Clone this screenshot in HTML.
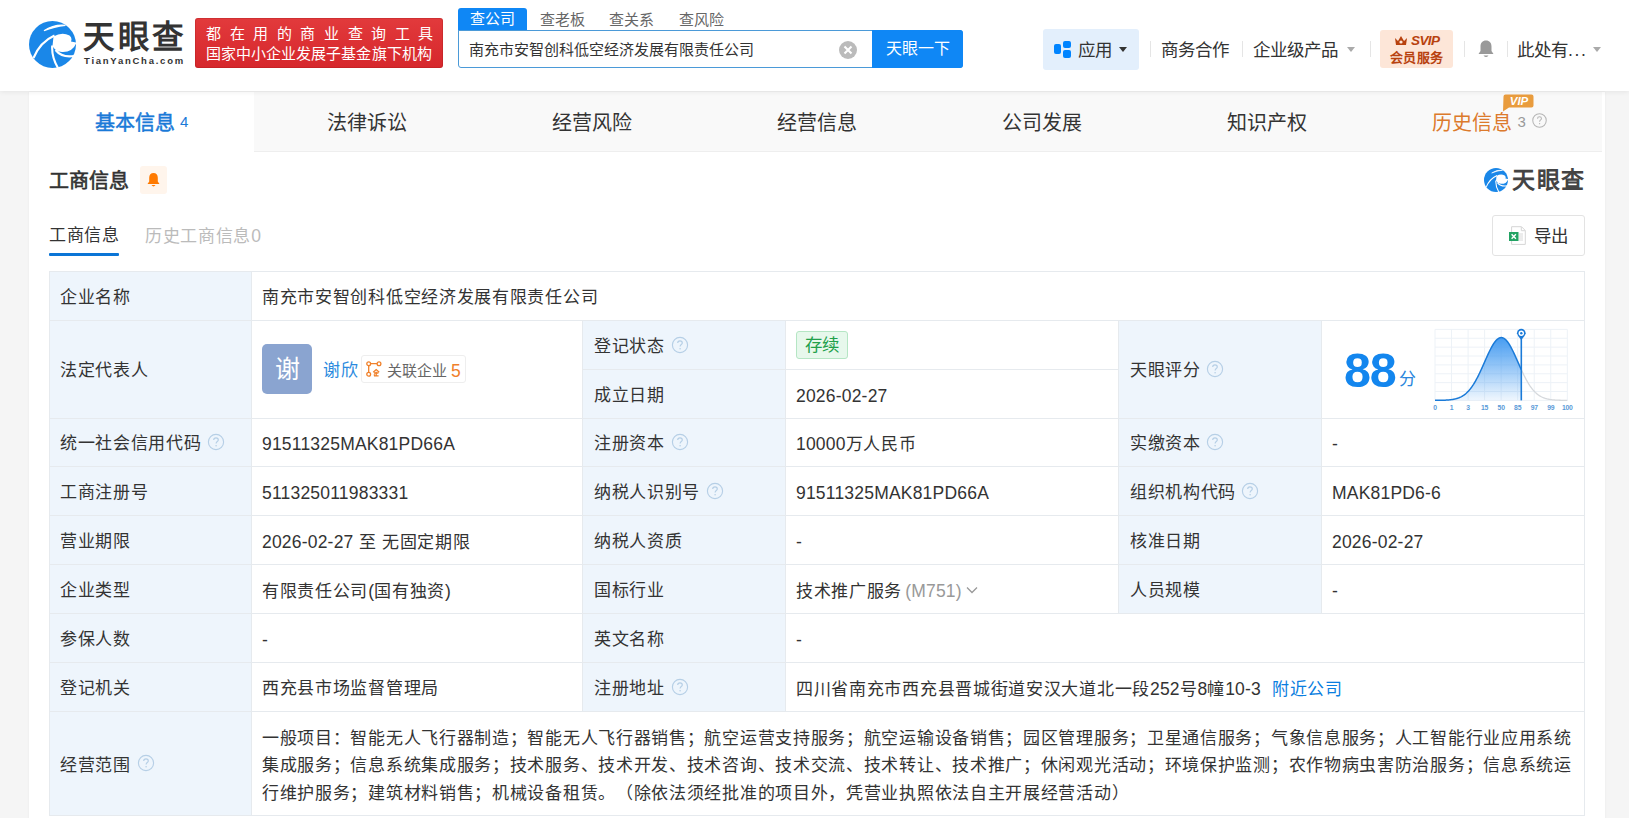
<!DOCTYPE html>
<html lang="zh-CN"><head><meta charset="utf-8">
<style>
*{margin:0;padding:0;box-sizing:border-box}
html,body{width:1629px;height:818px;overflow:hidden;background:#f5f5f5;font-family:"Liberation Sans",sans-serif;color:#333}
.a{position:absolute;white-space:nowrap;text-spacing-trim:space-all}
.k{font-size:17px;letter-spacing:.7px}
.n{font-size:17.5px;letter-spacing:.2px}
#hdr{position:absolute;left:0;top:0;width:1629px;height:91px;background:#fff;box-shadow:0 1px 5px rgba(0,0,0,.07);z-index:5}
#card{position:absolute;left:29px;top:92px;width:1576px;height:730px;background:#fff;box-shadow:0 0 2px rgba(0,0,0,.06)}
#tabs{position:absolute;left:0;top:0;width:1573px;height:60px;background:#f9f9f9;border-bottom:1px solid #eee}
.tab{position:absolute;top:2px;height:58px;line-height:58px;font-size:20px;color:#333;text-align:center;width:225px}
.sep{position:absolute;top:41px;width:1px;height:16px;background:#e5e5e5}
.caret{position:absolute;width:0;height:0;border-left:4px solid transparent;border-right:4px solid transparent;border-top:5px solid #999}
</style></head><body>
<div id="hdr">
 <!-- logo -->
 <svg class="a" style="left:29px;top:21px" width="47" height="47" viewBox="0 0 47 47">
  <circle cx="23.5" cy="23.5" r="23.5" fill="#1a87e8"/>
  <path d="M24.5 15.5Q33 10.5 40.5 14.5Q43.5 17 42 20.5L47.5 21.5Q44 31.5 33 31Q26 30.5 23.5 25Z" fill="#fff"/>
  <path d="M15 9.8Q25 3 36.5 4.3Q25 5.5 15 9.8Z" fill="#fff" stroke="#fff" stroke-width="1.2"/>
  <path d="M4.5 37Q11 21 25.5 14.5" fill="none" stroke="#fff" stroke-width="2.1"/>
  <path d="M23.2 24.5Q22.5 36 29 47" fill="none" stroke="#fff" stroke-width="2.1"/>
  <path d="M26.5 29Q33 37 45 35" fill="none" stroke="#fff" stroke-width="2.1"/>
 </svg>
 <div class="a" style="left:83px;top:17px;font-size:31.5px;line-height:40px;font-weight:bold;color:#333;letter-spacing:2.5px">天眼查</div>
 <div class="a" style="left:84px;top:55px;font-size:9.5px;line-height:11px;font-weight:bold;color:#333;letter-spacing:1.75px">TianYanCha.com</div>
 <!-- red badge -->
 <div class="a" style="left:195px;top:18px;width:248px;height:50px;background:linear-gradient(#e23a3c,#d6272c);border-radius:3px;box-shadow:inset 0 0 0 1px rgba(150,20,20,.25)"></div>
 <div class="a" style="left:206px;top:23px;font-size:15px;line-height:22px;color:#fff;letter-spacing:8.6px">都在用的商业查询工具</div>
 <div class="a" style="left:206px;top:43px;font-size:15px;line-height:22px;color:#fff;letter-spacing:0.05px">国家中小企业发展子基金旗下机构</div>
 <!-- search -->
 <div class="a" style="left:458px;top:8px;width:69px;height:23px;background:#0f87f5;border-radius:3px 3px 0 0;color:#fff;font-size:15px;line-height:22px;text-align:center">查公司</div>
 <div class="a" style="left:540px;top:9px;font-size:15px;line-height:22px;color:#666">查老板</div>
 <div class="a" style="left:609px;top:9px;font-size:15px;line-height:22px;color:#666">查关系</div>
 <div class="a" style="left:679px;top:9px;font-size:15px;line-height:22px;color:#666">查风险</div>
 <div class="a" style="left:458px;top:30px;width:505px;height:38px;border:1px solid #4b9ad8;border-radius:0 3px 3px 3px;background:#fff"></div>
 <div class="a" style="left:469px;top:31px;font-size:15px;line-height:37px;color:#333">南充市安智创科低空经济发展有限责任公司</div>
 <svg class="a" style="left:839px;top:41px" width="18" height="18" viewBox="0 0 18 18"><circle cx="9" cy="9" r="9" fill="#bbb"/><path d="M5.5 5.5L12.5 12.5M12.5 5.5L5.5 12.5" stroke="#fff" stroke-width="2.1"/></svg>
 <div class="a" style="left:872px;top:30px;width:91px;height:38px;background:#0f87f5;border-radius:0 3px 3px 0;color:#fff;font-size:16px;line-height:37px;text-align:center">天眼一下</div>
 <!-- right nav -->
 <div class="a" style="left:1043px;top:29px;width:96px;height:41px;background:#e3effc;border-radius:3px"></div>
 <svg class="a" style="left:1054px;top:41px" width="19" height="18" viewBox="0 0 19 18"><rect x="0" y="3" width="7" height="10" rx="2" fill="#0084ff"/><rect x="9" y="0" width="8" height="7" rx="2" fill="#0084ff"/><rect x="9" y="9" width="8" height="8" rx="2" fill="#0084ff"/></svg>
 <div class="a" style="left:1078px;top:39px;font-size:17.5px;line-height:22px;color:#333">应用</div>
 <div class="caret" style="left:1119px;top:47px;border-top-color:#333"></div>
 <div class="sep" style="left:1150px"></div>
 <div class="a" style="left:1161px;top:39px;font-size:17.5px;line-height:22px;color:#333">商务合作</div>
 <div class="sep" style="left:1242px"></div>
 <div class="a" style="left:1253px;top:39px;font-size:17.5px;line-height:22px;color:#333">企业级产品</div>
 <div class="caret" style="left:1347px;top:47px;border-top-color:#aaa"></div>
 <div class="sep" style="left:1370px"></div>
 <div class="a" style="left:1380px;top:30px;width:73px;height:38px;background:#fde6d8;border-radius:3px"></div>
 <svg class="a" style="left:1394px;top:35px" width="14" height="12" viewBox="0 0 14 12"><path d="M1 3L4 6L7 1L10 6L13 3L12 10H2Z" fill="#b8420f"/><circle cx="7" cy="7" r="1.6" fill="#fde6d8"/></svg>
 <div class="a" style="left:1411px;top:32px;font-size:13.5px;font-weight:bold;font-style:italic;color:#b8420f;line-height:18px;letter-spacing:-0.6px">SVIP</div>
 <div class="a" style="left:1390px;top:49px;font-size:13px;font-weight:bold;color:#b8420f;line-height:17px;letter-spacing:0.3px">会员服务</div>
 <div class="sep" style="left:1464px"></div>
 <svg class="a" style="left:1477px;top:39px" width="18" height="20" viewBox="0 0 18 20"><path d="M9 1.5C5.5 1.5 3.5 4 3.5 7.5V12L1.5 15H16.5L14.5 12V7.5C14.5 4 12.5 1.5 9 1.5Z" fill="#999"/><path d="M6.5 16.5Q9 19.5 11.5 16.5Z" fill="#999"/></svg>
 <div class="sep" style="left:1507px"></div>
 <div class="a" style="left:1517px;top:39px;font-size:17.5px;line-height:22px;color:#333">此处有<span style="letter-spacing:1.6px">...</span></div>
 <div class="caret" style="left:1593px;top:47px;border-top-color:#aaa"></div>
</div>
<div id="card">
 <div id="tabs">
  <div class="tab" style="left:0;top:0;height:60px;padding-top:2px;background:#fff;color:#1a7ad8"><span style="-webkit-text-stroke:0.5px #1a7ad8">基本信息</span> <span style="font-size:15px;position:relative;top:-3px">4</span></div>
  <div class="tab" style="left:225px">法律诉讼</div>
  <div class="tab" style="left:450px">经营风险</div>
  <div class="tab" style="left:675px">经营信息</div>
  <div class="tab" style="left:900px">公司发展</div>
  <div class="tab" style="left:1125px">知识产权</div>
  <div class="tab" style="left:1350px;width:auto;padding-left:53px;color:#dc7a2c;text-align:left">历史信息 <span style="font-size:15px;color:#999;position:relative;top:-3px">3</span></div>
  <svg class="a" style="left:1503px;top:21px" width="15" height="15" viewBox="0 0 16 16"><circle cx="8" cy="8" r="7.2" fill="none" stroke="#b5b5b5" stroke-width="1.1"/><path d="M5.9 6.2C5.9 4.9 6.8 4.1 8 4.1C9.2 4.1 10.1 4.9 10.1 6C10.1 7.4 8.1 7.5 8.1 9.2" fill="none" stroke="#b5b5b5" stroke-width="1.1"/><circle cx="8.1" cy="11.4" r="0.7" fill="#b5b5b5"/></svg>
  <svg class="a" style="left:1473px;top:2px" width="32" height="18" viewBox="0 0 32 18"><path d="M2.5 0.5H29.5Q31.5 0.5 31.5 2.5V11.5Q31.5 13.5 29.5 13.5H7L1 17.5L1.5 2.5Q1.5 0.5 3.5 0.5Z" fill="#e99c3e"/><text x="17" y="11.2" text-anchor="middle" font-family="Liberation Sans" font-weight="bold" font-style="italic" font-size="11.5" fill="#fff">VIP</text></svg>
 </div>
</div>

<!-- section title -->
<div class="a" style="left:49px;top:168px;font-size:20px;line-height:26px;-webkit-text-stroke:0.6px #333;color:#333">工商信息</div>
<div class="a" style="left:140px;top:166px;width:27px;height:28px;background:#fff5ec;border-radius:3px"></div>
<svg class="a" style="left:146px;top:172px" width="15" height="16" viewBox="0 0 15 16"><path d="M7.5 1C4.8 1 3.2 3 3.2 5.8V9.5L1.5 12H13.5L11.8 9.5V5.8C11.8 3 10.2 1 7.5 1Z" fill="#ff7a00"/><path d="M5.5 13Q7.5 15.8 9.5 13Z" fill="#ff7a00"/></svg>
<!-- right logo -->
<svg class="a" style="left:1484px;top:168px" width="24" height="24" viewBox="0 0 47 47"><circle cx="23.5" cy="23.5" r="23.5" fill="#1a87e8"/>
  <path d="M24.5 15.5Q33 10.5 40.5 14.5Q43.5 17 42 20.5L47.5 21.5Q44 31.5 33 31Q26 30.5 23.5 25Z" fill="#fff"/>
  <path d="M15 9.8Q25 3 36.5 4.3Q25 5.5 15 9.8Z" fill="#fff" stroke="#fff" stroke-width="1.2"/>
  <path d="M4.5 37Q11 21 25.5 14.5" fill="none" stroke="#fff" stroke-width="2.1"/>
  <path d="M23.2 24.5Q22.5 36 29 47" fill="none" stroke="#fff" stroke-width="2.1"/>
  <path d="M26.5 29Q33 37 45 35" fill="none" stroke="#fff" stroke-width="2.1"/>
 </svg>
<div class="a" style="left:1512px;top:165px;font-size:23px;line-height:30px;font-weight:bold;color:#444;letter-spacing:1.5px">天眼查</div>
<!-- subtabs -->
<div class="a k" style="left:49px;top:224px;line-height:24px;color:#333">工商信息</div>
<div class="a" style="left:49px;top:253px;width:70px;height:3px;background:#0b75d6;border-radius:1px"></div>
<div class="a k" style="left:145px;top:224px;line-height:24px;color:#bbb">历史工商信息<span class="n">0</span></div>
<!-- export -->
<div class="a" style="left:1492px;top:215px;width:93px;height:41px;border:1px solid #e3e3e3;border-radius:3px;background:#fff"></div>
<svg class="a" style="left:1508px;top:226px" width="20" height="20" viewBox="0 0 20 20"><path d="M3.6 0.7H13.5L17.3 4.5V18.4H3.6Z" fill="#fff" stroke="#d6d6d6" stroke-width="1"/><path d="M13.3 0.9V4.7H17.1" fill="none" stroke="#d6d6d6" stroke-width="1"/><path d="M11 8H15M11 10H15M11 12H15M11 14H15" stroke="#d8d8d8" stroke-width="1"/><rect x="1" y="6" width="9.5" height="9" fill="#22a363"/><path d="M3.6 8.3L7.9 12.8M7.9 8.3L3.6 12.8" stroke="#fff" stroke-width="1.4"/></svg>
<div class="a" style="left:1534px;top:224px;font-size:17.5px;line-height:24px;color:#333">导出</div>
<!--TABLE--><div class="a" style="left:49px;top:271px;width:1535px;height:544px;background:#fff"></div>
<div class="a" style="left:49px;top:271px;width:202px;height:544px;background:#eef5fc"></div>
<div class="a" style="left:582px;top:320px;width:203px;height:391px;background:#eef5fc"></div>
<div class="a" style="left:1118px;top:320px;width:203px;height:293px;background:#eef5fc"></div>
<div class="a" style="left:49px;top:271px;width:1536px;height:1px;background:#e6eaee"></div>
<div class="a" style="left:49px;top:320px;width:1536px;height:1px;background:#e6eaee"></div>
<div class="a" style="left:49px;top:418px;width:1536px;height:1px;background:#e6eaee"></div>
<div class="a" style="left:49px;top:466px;width:1536px;height:1px;background:#e6eaee"></div>
<div class="a" style="left:49px;top:515px;width:1536px;height:1px;background:#e6eaee"></div>
<div class="a" style="left:49px;top:564px;width:1536px;height:1px;background:#e6eaee"></div>
<div class="a" style="left:49px;top:613px;width:1536px;height:1px;background:#e6eaee"></div>
<div class="a" style="left:49px;top:662px;width:1536px;height:1px;background:#e6eaee"></div>
<div class="a" style="left:49px;top:711px;width:1536px;height:1px;background:#e6eaee"></div>
<div class="a" style="left:49px;top:815px;width:1536px;height:1px;background:#e6eaee"></div>
<div class="a" style="left:582px;top:369px;width:536px;height:1px;background:#e6eaee"></div>
<div class="a" style="left:49px;top:271px;width:1px;height:545px;background:#e6eaee"></div>
<div class="a" style="left:1584px;top:271px;width:1px;height:545px;background:#e6eaee"></div>
<div class="a" style="left:251px;top:271px;width:1px;height:545px;background:#e6eaee"></div>
<div class="a" style="left:582px;top:320px;width:1px;height:392px;background:#e6eaee"></div>
<div class="a" style="left:785px;top:320px;width:1px;height:392px;background:#e6eaee"></div>
<div class="a" style="left:1118px;top:320px;width:1px;height:294px;background:#e6eaee"></div>
<div class="a" style="left:1321px;top:320px;width:1px;height:294px;background:#e6eaee"></div>
<div class="a k" style="left:60px;top:285.5px;line-height:24px;color:#333;">企业名称</div>
<div class="a k" style="left:262px;top:285.5px;line-height:24px;color:#333;">南充市安智创科低空经济发展有限责任公司</div>
<div class="a k" style="left:60px;top:359.0px;line-height:24px;color:#333;">法定代表人</div>
<div class="a" style="left:262px;top:344px;width:50px;height:50px;background:#8aa4d0;border-radius:5px;color:#fff;font-size:25px;line-height:50px;text-align:center">谢</div>
<div class="a k" style="left:323px;top:359.0px;line-height:24px;color:#2b8ade;">谢欣</div>
<div class="a" style="left:361px;top:355px;width:105px;height:28px;border:1px solid #eeeeee;border-radius:3px"></div>
<svg class="a" style="left:366px;top:361px" width="16" height="16" viewBox="0 0 16 16"><g fill="none" stroke="#f0802a" stroke-width="1.3"><circle cx="2.7" cy="2.7" r="1.9"/><circle cx="13" cy="2.7" r="1.9"/><circle cx="2.7" cy="13.2" r="1.9"/><path d="M4.6 2.7H11.1M2.7 4.6V11.3"/><path d="M7.2 11.2L10.2 8.6L13.2 11.2M8 12H12.4M10.2 10.8V14.8M8 14.8H12.6M8.4 13.2V14.8"/></g></svg>
<div class="a k" style="left:387px;top:359.0px;line-height:24px;color:#666;font-size:15px;letter-spacing:0">关联企业</div>
<div class="a k" style="left:451px;top:359.0px;line-height:24px;color:#f0802a;font-size:15px;letter-spacing:0"><span class="n">5</span></div>
<div class="a k" style="left:594px;top:334.5px;line-height:24px;color:#333;">登记状态</div>
<svg class="a" style="left:671px;top:335.8px" width="18" height="18" viewBox="0 0 18 18"><circle cx="9" cy="9" r="7.6" fill="none" stroke="#b6cfe6" stroke-width="1.15"/><path d="M6.7 7.1C6.7 5.7 7.7 4.8 9 4.8C10.3 4.8 11.3 5.7 11.3 6.9C11.3 8.5 9.1 8.6 9.1 10.4" fill="none" stroke="#b6cfe6" stroke-width="1.15"/><circle cx="9.1" cy="12.8" r="0.8" fill="#b6cfe6"/></svg>
<div class="a k" style="left:594px;top:384.0px;line-height:24px;color:#333;">成立日期</div>
<div class="a" style="left:796px;top:331px;width:52px;height:28px;background:#e7f8ec;border:1px solid #b5e6c4;border-radius:3px;color:#22a04b;font-size:17.5px;line-height:26px;text-align:center">存续</div>
<div class="a k" style="left:796px;top:384.0px;line-height:24px;color:#333;"><span class="n">2026-02-27</span></div>
<div class="a k" style="left:1130px;top:359.0px;line-height:24px;color:#333;">天眼评分</div>
<svg class="a" style="left:1206px;top:360px" width="18" height="18" viewBox="0 0 18 18"><circle cx="9" cy="9" r="7.6" fill="none" stroke="#b6cfe6" stroke-width="1.15"/><path d="M6.7 7.1C6.7 5.7 7.7 4.8 9 4.8C10.3 4.8 11.3 5.7 11.3 6.9C11.3 8.5 9.1 8.6 9.1 10.4" fill="none" stroke="#b6cfe6" stroke-width="1.15"/><circle cx="9.1" cy="12.8" r="0.8" fill="#b6cfe6"/></svg>
<div class="a k" style="left:60px;top:432.0px;line-height:24px;color:#333;">统一社会信用代码</div>
<svg class="a" style="left:207px;top:433.0px" width="18" height="18" viewBox="0 0 18 18"><circle cx="9" cy="9" r="7.6" fill="none" stroke="#b6cfe6" stroke-width="1.15"/><path d="M6.7 7.1C6.7 5.7 7.7 4.8 9 4.8C10.3 4.8 11.3 5.7 11.3 6.9C11.3 8.5 9.1 8.6 9.1 10.4" fill="none" stroke="#b6cfe6" stroke-width="1.15"/><circle cx="9.1" cy="12.8" r="0.8" fill="#b6cfe6"/></svg>
<div class="a k" style="left:262px;top:432.0px;line-height:24px;color:#333;"><span class="n">91511325MAK81PD66A</span></div>
<div class="a k" style="left:594px;top:432.0px;line-height:24px;color:#333;">注册资本</div>
<svg class="a" style="left:671px;top:433.0px" width="18" height="18" viewBox="0 0 18 18"><circle cx="9" cy="9" r="7.6" fill="none" stroke="#b6cfe6" stroke-width="1.15"/><path d="M6.7 7.1C6.7 5.7 7.7 4.8 9 4.8C10.3 4.8 11.3 5.7 11.3 6.9C11.3 8.5 9.1 8.6 9.1 10.4" fill="none" stroke="#b6cfe6" stroke-width="1.15"/><circle cx="9.1" cy="12.8" r="0.8" fill="#b6cfe6"/></svg>
<div class="a k" style="left:796px;top:432.0px;line-height:24px;color:#333;"><span class="n">10000</span>万人民币</div>
<div class="a k" style="left:1130px;top:432.0px;line-height:24px;color:#333;">实缴资本</div>
<svg class="a" style="left:1206px;top:433.0px" width="18" height="18" viewBox="0 0 18 18"><circle cx="9" cy="9" r="7.6" fill="none" stroke="#b6cfe6" stroke-width="1.15"/><path d="M6.7 7.1C6.7 5.7 7.7 4.8 9 4.8C10.3 4.8 11.3 5.7 11.3 6.9C11.3 8.5 9.1 8.6 9.1 10.4" fill="none" stroke="#b6cfe6" stroke-width="1.15"/><circle cx="9.1" cy="12.8" r="0.8" fill="#b6cfe6"/></svg>
<div class="a k" style="left:1332px;top:432.0px;line-height:24px;color:#333;"><span class="n">-</span></div>
<div class="a k" style="left:60px;top:480.5px;line-height:24px;color:#333;">工商注册号</div>
<div class="a k" style="left:262px;top:480.5px;line-height:24px;color:#333;"><span class="n">511325011983331</span></div>
<div class="a k" style="left:594px;top:480.5px;line-height:24px;color:#333;">纳税人识别号</div>
<svg class="a" style="left:706px;top:481.5px" width="18" height="18" viewBox="0 0 18 18"><circle cx="9" cy="9" r="7.6" fill="none" stroke="#b6cfe6" stroke-width="1.15"/><path d="M6.7 7.1C6.7 5.7 7.7 4.8 9 4.8C10.3 4.8 11.3 5.7 11.3 6.9C11.3 8.5 9.1 8.6 9.1 10.4" fill="none" stroke="#b6cfe6" stroke-width="1.15"/><circle cx="9.1" cy="12.8" r="0.8" fill="#b6cfe6"/></svg>
<div class="a k" style="left:796px;top:480.5px;line-height:24px;color:#333;"><span class="n">91511325MAK81PD66A</span></div>
<div class="a k" style="left:1130px;top:480.5px;line-height:24px;color:#333;">组织机构代码</div>
<svg class="a" style="left:1241px;top:481.5px" width="18" height="18" viewBox="0 0 18 18"><circle cx="9" cy="9" r="7.6" fill="none" stroke="#b6cfe6" stroke-width="1.15"/><path d="M6.7 7.1C6.7 5.7 7.7 4.8 9 4.8C10.3 4.8 11.3 5.7 11.3 6.9C11.3 8.5 9.1 8.6 9.1 10.4" fill="none" stroke="#b6cfe6" stroke-width="1.15"/><circle cx="9.1" cy="12.8" r="0.8" fill="#b6cfe6"/></svg>
<div class="a k" style="left:1332px;top:480.5px;line-height:24px;color:#333;"><span class="n">MAK81PD6-6</span></div>
<div class="a k" style="left:60px;top:529.5px;line-height:24px;color:#333;">营业期限</div>
<div class="a k" style="left:262px;top:529.5px;line-height:24px;color:#333;"><span class="n">2026-02-27</span> 至 无固定期限</div>
<div class="a k" style="left:594px;top:529.5px;line-height:24px;color:#333;">纳税人资质</div>
<div class="a k" style="left:796px;top:529.5px;line-height:24px;color:#333;"><span class="n">-</span></div>
<div class="a k" style="left:1130px;top:529.5px;line-height:24px;color:#333;">核准日期</div>
<div class="a k" style="left:1332px;top:529.5px;line-height:24px;color:#333;"><span class="n">2026-02-27</span></div>
<div class="a k" style="left:60px;top:578.5px;line-height:24px;color:#333;">企业类型</div>
<div class="a k" style="left:262px;top:578.5px;line-height:24px;color:#333;">有限责任公司<span class="n">(</span>国有独资<span class="n">)</span></div>
<div class="a k" style="left:594px;top:578.5px;line-height:24px;color:#333;">国标行业</div>
<div class="a k" style="left:796px;top:578.5px;line-height:24px;color:#333;">技术推广服务<span style="color:#999;margin-left:3px"><span class="n">(M751)</span></span></div>
<svg class="a" style="left:965px;top:584px" width="14" height="12" viewBox="0 0 14 12"><path d="M2 3.5L7 8.5L12 3.5" fill="none" stroke="#999" stroke-width="1.3"/></svg>
<div class="a k" style="left:1130px;top:578.5px;line-height:24px;color:#333;">人员规模</div>
<div class="a k" style="left:1332px;top:578.5px;line-height:24px;color:#333;"><span class="n">-</span></div>
<div class="a k" style="left:60px;top:627.5px;line-height:24px;color:#333;">参保人数</div>
<div class="a k" style="left:262px;top:627.5px;line-height:24px;color:#333;"><span class="n">-</span></div>
<div class="a k" style="left:594px;top:627.5px;line-height:24px;color:#333;">英文名称</div>
<div class="a k" style="left:796px;top:627.5px;line-height:24px;color:#333;"><span class="n">-</span></div>
<div class="a k" style="left:60px;top:676.5px;line-height:24px;color:#333;">登记机关</div>
<div class="a k" style="left:262px;top:676.5px;line-height:24px;color:#333;">西充县市场监督管理局</div>
<div class="a k" style="left:594px;top:676.5px;line-height:24px;color:#333;">注册地址</div>
<svg class="a" style="left:671px;top:677.5px" width="18" height="18" viewBox="0 0 18 18"><circle cx="9" cy="9" r="7.6" fill="none" stroke="#b6cfe6" stroke-width="1.15"/><path d="M6.7 7.1C6.7 5.7 7.7 4.8 9 4.8C10.3 4.8 11.3 5.7 11.3 6.9C11.3 8.5 9.1 8.6 9.1 10.4" fill="none" stroke="#b6cfe6" stroke-width="1.15"/><circle cx="9.1" cy="12.8" r="0.8" fill="#b6cfe6"/></svg>
<div class="a k" style="left:796px;top:676.5px;line-height:24px;color:#333;">四川省南充市西充县晋城街道安汉大道北一段<span class="n">252</span>号<span class="n">8</span>幢<span class="n">10-3</span><span style="color:#0a7ee0;margin-left:11px">附近公司</span></div>
<div class="a k" style="left:60px;top:753.5px;line-height:24px;color:#333;">经营范围</div>
<svg class="a" style="left:137px;top:754.3px" width="18" height="18" viewBox="0 0 18 18"><circle cx="9" cy="9" r="7.6" fill="none" stroke="#b6cfe6" stroke-width="1.15"/><path d="M6.7 7.1C6.7 5.7 7.7 4.8 9 4.8C10.3 4.8 11.3 5.7 11.3 6.9C11.3 8.5 9.1 8.6 9.1 10.4" fill="none" stroke="#b6cfe6" stroke-width="1.15"/><circle cx="9.1" cy="12.8" r="0.8" fill="#b6cfe6"/></svg>
<div class="a k" style="left:262px;top:726.5px;line-height:24px;color:#333;">一般项目：智能无人飞行器制造；智能无人飞行器销售；航空运营支持服务；航空运输设备销售；园区管理服务；卫星通信服务；气象信息服务；人工智能行业应用系统</div>
<div class="a k" style="left:262px;top:754.0px;line-height:24px;color:#333;">集成服务；信息系统集成服务；技术服务、技术开发、技术咨询、技术交流、技术转让、技术推广；休闲观光活动；环境保护监测；农作物病虫害防治服务；信息系统运</div>
<div class="a k" style="left:262px;top:781.5px;line-height:24px;color:#333;">行维护服务；建筑材料销售；机械设备租赁。（除依法须经批准的项目外，凭营业执照依法自主开展经营活动）</div>
<svg class="a" style="left:1428px;top:322px" width="150" height="95" viewBox="0 0 150 95">
<defs><linearGradient id="gr" x1="0" y1="0" x2="0" y2="1"><stop offset="0" stop-color="#3d97f0" stop-opacity="0.95"/><stop offset="1" stop-color="#3d97f0" stop-opacity="0.08"/></linearGradient></defs>
<path d="M7.00 7.40V78.40" stroke="#edf2f7" stroke-width="1"/><path d="M7.00 7.40H139.30" stroke="#edf2f7" stroke-width="1"/><path d="M23.54 7.40V78.40" stroke="#edf2f7" stroke-width="1"/><path d="M7.00 16.27H139.30" stroke="#edf2f7" stroke-width="1"/><path d="M40.08 7.40V78.40" stroke="#edf2f7" stroke-width="1"/><path d="M7.00 25.15H139.30" stroke="#edf2f7" stroke-width="1"/><path d="M56.61 7.40V78.40" stroke="#edf2f7" stroke-width="1"/><path d="M7.00 34.02H139.30" stroke="#edf2f7" stroke-width="1"/><path d="M73.15 7.40V78.40" stroke="#edf2f7" stroke-width="1"/><path d="M7.00 42.90H139.30" stroke="#edf2f7" stroke-width="1"/><path d="M89.69 7.40V78.40" stroke="#edf2f7" stroke-width="1"/><path d="M7.00 51.77H139.30" stroke="#edf2f7" stroke-width="1"/><path d="M106.22 7.40V78.40" stroke="#edf2f7" stroke-width="1"/><path d="M7.00 60.65H139.30" stroke="#edf2f7" stroke-width="1"/><path d="M122.76 7.40V78.40" stroke="#edf2f7" stroke-width="1"/><path d="M7.00 69.52H139.30" stroke="#edf2f7" stroke-width="1"/><path d="M139.30 7.40V78.40" stroke="#edf2f7" stroke-width="1"/><path d="M7.00 78.40H139.30" stroke="#edf2f7" stroke-width="1"/>
<path d="M7.00,78.37 L7.50,78.37 L8.00,78.37 L8.50,78.36 L9.00,78.36 L9.50,78.35 L10.00,78.35 L10.50,78.34 L11.00,78.33 L11.50,78.33 L12.00,78.32 L12.50,78.31 L13.00,78.30 L13.50,78.29 L14.00,78.28 L14.50,78.26 L15.00,78.25 L15.50,78.23 L16.00,78.21 L16.50,78.19 L17.00,78.17 L17.50,78.15 L18.00,78.12 L18.50,78.09 L19.00,78.06 L19.50,78.03 L20.00,77.99 L20.50,77.95 L21.00,77.90 L21.50,77.86 L22.00,77.80 L22.50,77.75 L23.00,77.69 L23.50,77.62 L24.00,77.55 L24.50,77.47 L25.00,77.39 L25.50,77.30 L26.00,77.20 L26.50,77.10 L27.00,76.98 L27.50,76.86 L28.00,76.73 L28.50,76.60 L29.00,76.45 L29.50,76.29 L30.00,76.12 L30.50,75.94 L31.00,75.75 L31.50,75.54 L32.00,75.32 L32.50,75.09 L33.00,74.85 L33.50,74.59 L34.00,74.31 L34.50,74.02 L35.00,73.71 L35.50,73.38 L36.00,73.03 L36.50,72.67 L37.00,72.29 L37.50,71.88 L38.00,71.46 L38.50,71.02 L39.00,70.55 L39.50,70.06 L40.00,69.55 L40.50,69.02 L41.00,68.46 L41.50,67.88 L42.00,67.28 L42.50,66.65 L43.00,66.00 L43.50,65.32 L44.00,64.62 L44.50,63.89 L45.00,63.14 L45.50,62.37 L46.00,61.56 L46.50,60.74 L47.00,59.89 L47.50,59.02 L48.00,58.12 L48.50,57.20 L49.00,56.26 L49.50,55.30 L50.00,54.31 L50.50,53.31 L51.00,52.29 L51.50,51.25 L52.00,50.20 L52.50,49.13 L53.00,48.04 L53.50,46.95 L54.00,45.84 L54.50,44.73 L55.00,43.60 L55.50,42.48 L56.00,41.34 L56.50,40.21 L57.00,39.08 L57.50,37.95 L58.00,36.82 L58.50,35.70 L59.00,34.59 L59.50,33.48 L60.00,32.40 L60.50,31.32 L61.00,30.27 L61.50,29.23 L62.00,28.22 L62.50,27.23 L63.00,26.27 L63.50,25.34 L64.00,24.44 L64.50,23.57 L65.00,22.74 L65.50,21.94 L66.00,21.19 L66.50,20.47 L67.00,19.80 L67.50,19.18 L68.00,18.59 L68.50,18.06 L69.00,17.58 L69.50,17.15 L70.00,16.77 L70.50,16.44 L71.00,16.16 L71.50,15.94 L72.00,15.77 L72.50,15.66 L73.00,15.61 L73.50,15.61 L74.00,15.66 L74.50,15.77 L75.00,15.94 L75.50,16.16 L76.00,16.44 L76.50,16.77 L77.00,17.15 L77.50,17.58 L78.00,18.06 L78.50,18.59 L79.00,19.18 L79.50,19.80 L80.00,20.47 L80.50,21.19 L81.00,21.94 L81.50,22.74 L82.00,23.57 L82.50,24.44 L83.00,25.34 L83.50,26.27 L84.00,27.23 L84.50,28.22 L85.00,29.23 L85.50,30.27 L86.00,31.32 L86.50,32.40 L87.00,33.48 L87.50,34.59 L88.00,35.70 L88.50,36.82 L89.00,37.95 L89.50,39.08 L90.00,40.21 L90.50,41.34 L91.00,42.48 L91.50,43.60 L92.00,44.73 L92.50,45.84 L93.00,46.95 L93.30,47.61 L93.30,78.40 L7.00,78.40 Z" fill="url(#gr)"/>
<path d="M93.30,47.61 L93.80,48.70 L94.30,49.77 L94.80,50.83 L95.30,51.88 L95.80,52.91 L96.30,53.92 L96.80,54.91 L97.30,55.88 L97.80,56.83 L98.30,57.75 L98.80,58.66 L99.30,59.54 L99.80,60.40 L100.30,61.24 L100.80,62.05 L101.30,62.83 L101.80,63.60 L102.30,64.33 L102.80,65.04 L103.30,65.73 L103.80,66.39 L104.30,67.03 L104.80,67.65 L105.30,68.24 L105.80,68.80 L106.30,69.34 L106.80,69.86 L107.30,70.36 L107.80,70.83 L108.30,71.29 L108.80,71.72 L109.30,72.13 L109.80,72.52 L110.30,72.89 L110.80,73.24 L111.30,73.58 L111.80,73.89 L112.30,74.19 L112.80,74.48 L113.30,74.74 L113.80,75.00 L114.30,75.23 L114.80,75.46 L115.30,75.67 L115.80,75.86 L116.30,76.05 L116.80,76.22 L117.30,76.39 L117.80,76.54 L118.30,76.68 L118.80,76.81 L119.30,76.94 L119.80,77.05 L120.30,77.16 L120.80,77.26 L121.30,77.35 L121.80,77.44 L122.30,77.52 L122.80,77.59 L123.30,77.66 L123.80,77.72 L124.30,77.78 L124.80,77.84 L125.30,77.88 L125.80,77.93 L126.30,77.97 L126.80,78.01 L127.30,78.05 L127.80,78.08 L128.30,78.11 L128.80,78.14 L129.30,78.16 L129.80,78.18 L130.30,78.20 L130.80,78.22 L131.30,78.24 L131.80,78.26 L132.30,78.27 L132.80,78.28 L133.30,78.29 L133.80,78.31 L134.30,78.32 L134.80,78.32 L135.30,78.33 L135.80,78.34 L136.30,78.35 L136.80,78.35 L137.30,78.36 L137.80,78.36 L138.30,78.37 L138.80,78.37 L139.30,78.37" fill="none" stroke="#d5d8dc" stroke-width="1.3"/>
<path d="M7.00,78.37 L7.50,78.37 L8.00,78.37 L8.50,78.36 L9.00,78.36 L9.50,78.35 L10.00,78.35 L10.50,78.34 L11.00,78.33 L11.50,78.33 L12.00,78.32 L12.50,78.31 L13.00,78.30 L13.50,78.29 L14.00,78.28 L14.50,78.26 L15.00,78.25 L15.50,78.23 L16.00,78.21 L16.50,78.19 L17.00,78.17 L17.50,78.15 L18.00,78.12 L18.50,78.09 L19.00,78.06 L19.50,78.03 L20.00,77.99 L20.50,77.95 L21.00,77.90 L21.50,77.86 L22.00,77.80 L22.50,77.75 L23.00,77.69 L23.50,77.62 L24.00,77.55 L24.50,77.47 L25.00,77.39 L25.50,77.30 L26.00,77.20 L26.50,77.10 L27.00,76.98 L27.50,76.86 L28.00,76.73 L28.50,76.60 L29.00,76.45 L29.50,76.29 L30.00,76.12 L30.50,75.94 L31.00,75.75 L31.50,75.54 L32.00,75.32 L32.50,75.09 L33.00,74.85 L33.50,74.59 L34.00,74.31 L34.50,74.02 L35.00,73.71 L35.50,73.38 L36.00,73.03 L36.50,72.67 L37.00,72.29 L37.50,71.88 L38.00,71.46 L38.50,71.02 L39.00,70.55 L39.50,70.06 L40.00,69.55 L40.50,69.02 L41.00,68.46 L41.50,67.88 L42.00,67.28 L42.50,66.65 L43.00,66.00 L43.50,65.32 L44.00,64.62 L44.50,63.89 L45.00,63.14 L45.50,62.37 L46.00,61.56 L46.50,60.74 L47.00,59.89 L47.50,59.02 L48.00,58.12 L48.50,57.20 L49.00,56.26 L49.50,55.30 L50.00,54.31 L50.50,53.31 L51.00,52.29 L51.50,51.25 L52.00,50.20 L52.50,49.13 L53.00,48.04 L53.50,46.95 L54.00,45.84 L54.50,44.73 L55.00,43.60 L55.50,42.48 L56.00,41.34 L56.50,40.21 L57.00,39.08 L57.50,37.95 L58.00,36.82 L58.50,35.70 L59.00,34.59 L59.50,33.48 L60.00,32.40 L60.50,31.32 L61.00,30.27 L61.50,29.23 L62.00,28.22 L62.50,27.23 L63.00,26.27 L63.50,25.34 L64.00,24.44 L64.50,23.57 L65.00,22.74 L65.50,21.94 L66.00,21.19 L66.50,20.47 L67.00,19.80 L67.50,19.18 L68.00,18.59 L68.50,18.06 L69.00,17.58 L69.50,17.15 L70.00,16.77 L70.50,16.44 L71.00,16.16 L71.50,15.94 L72.00,15.77 L72.50,15.66 L73.00,15.61 L73.50,15.61 L74.00,15.66 L74.50,15.77 L75.00,15.94 L75.50,16.16 L76.00,16.44 L76.50,16.77 L77.00,17.15 L77.50,17.58 L78.00,18.06 L78.50,18.59 L79.00,19.18 L79.50,19.80 L80.00,20.47 L80.50,21.19 L81.00,21.94 L81.50,22.74 L82.00,23.57 L82.50,24.44 L83.00,25.34 L83.50,26.27 L84.00,27.23 L84.50,28.22 L85.00,29.23 L85.50,30.27 L86.00,31.32 L86.50,32.40 L87.00,33.48 L87.50,34.59 L88.00,35.70 L88.50,36.82 L89.00,37.95 L89.50,39.08 L90.00,40.21 L90.50,41.34 L91.00,42.48 L91.50,43.60 L92.00,44.73 L92.50,45.84 L93.00,46.95 L93.30,47.61" fill="none" stroke="#1a7ad8" stroke-width="1.5"/>
<path d="M93.30 14V78.39999999999998" stroke="#1a7ad8" stroke-width="1.6"/>
<path d="M88.90 11.25 A4.4 4.4 0 1 1 97.70 11.25 Q97.10 14.300000000000011 93.30 18 Q89.50 14.300000000000011 88.90 11.25 Z" fill="#1a7ad8"/>
<circle cx="93.30" cy="11.25" r="2.7" fill="#fff"/>
<circle cx="93.30" cy="11.25" r="1.2" fill="#1a7ad8"/>
<text x="7.00" y="88.00" text-anchor="middle" font-size="6.8" font-weight="bold" fill="#5a9ad8" letter-spacing="-0.2" font-family="Liberation Sans">0</text><text x="23.54" y="88.00" text-anchor="middle" font-size="6.8" font-weight="bold" fill="#5a9ad8" letter-spacing="-0.2" font-family="Liberation Sans">1</text><text x="40.08" y="88.00" text-anchor="middle" font-size="6.8" font-weight="bold" fill="#5a9ad8" letter-spacing="-0.2" font-family="Liberation Sans">3</text><text x="56.61" y="88.00" text-anchor="middle" font-size="6.8" font-weight="bold" fill="#5a9ad8" letter-spacing="-0.2" font-family="Liberation Sans">15</text><text x="73.15" y="88.00" text-anchor="middle" font-size="6.8" font-weight="bold" fill="#5a9ad8" letter-spacing="-0.2" font-family="Liberation Sans">50</text><text x="89.69" y="88.00" text-anchor="middle" font-size="6.8" font-weight="bold" fill="#5a9ad8" letter-spacing="-0.2" font-family="Liberation Sans">85</text><text x="106.22" y="88.00" text-anchor="middle" font-size="6.8" font-weight="bold" fill="#5a9ad8" letter-spacing="-0.2" font-family="Liberation Sans">97</text><text x="122.76" y="88.00" text-anchor="middle" font-size="6.8" font-weight="bold" fill="#5a9ad8" letter-spacing="-0.2" font-family="Liberation Sans">99</text><text x="139.30" y="88.00" text-anchor="middle" font-size="6.8" font-weight="bold" fill="#5a9ad8" letter-spacing="-0.2" font-family="Liberation Sans">100</text>
</svg>
<div class="a" style="left:1344px;top:341px;font-size:48.5px;line-height:58px;font-weight:bold;color:#1386ee;letter-spacing:-1.2px">88</div>
<div class="a" style="left:1399px;top:369px;font-size:17px;line-height:22px;color:#2a86dc">分</div>
<!--/TABLE--></body></html>
